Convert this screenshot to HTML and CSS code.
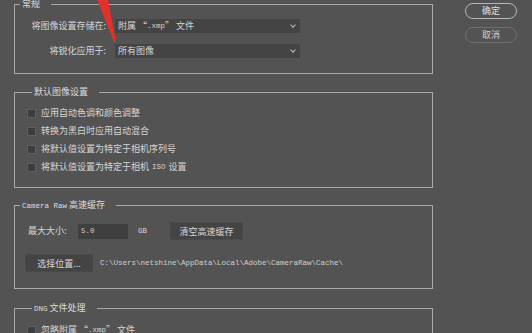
FILE: index.html
```html
<!DOCTYPE html>
<html lang="zh-CN">
    <head>
        <meta charset="UTF-8">
        <title>Camera Raw 首选项</title>
        <link rel="stylesheet" href="styles.css">
    </head>
    <body>
        <div class="dialog">
            <div class="main">

                <fieldset class="group group-general">
                    <legend>常规</legend>
                    <div class="form-grid">
                        <label>将图像设置存储在:</label>
                        <div class="select">附属 “<span class="mono">.xmp</span>” 文件<span class="caret"></span></div>
                        <label>将锐化应用于:</label>
                        <div class="select">所有图像<span class="caret"></span></div>
                    </div>
                </fieldset>

                <fieldset class="group group-defaults">
                    <legend>默认图像设置</legend>
                    <div class="check-row"><span class="checkbox"></span>应用自动色调和颜色调整</div>
                    <div class="check-row"><span class="checkbox"></span>转换为黑白时应用自动混合</div>
                    <div class="check-row"><span class="checkbox"></span>将默认值设置为特定于相机序列号</div>
                    <div class="check-row"><span class="checkbox"></span>将默认值设置为特定于相机 <span class="mono iso">ISO</span> 设置</div>
                </fieldset>

                <fieldset class="group group-cache">
                    <legend><span class="mono">Camera Raw</span> 高速缓存</legend>
                    <div class="cache-row">
                        <label class="size-label">最大大小:</label>
                        <div class="text-input mono">5.0</div>
                        <span class="unit mono">GB</span>
                        <div class="flat-button purge">清空高速缓存</div>
                    </div>
                    <div class="cache-row second">
                        <div class="flat-button choose">选择位置...</div>
                        <span class="path mono">C:\Users\netshine\AppData\Local\Adobe\CameraRaw\Cache\</span>
                    </div>
                </fieldset>

                <fieldset class="group group-dng">
                    <legend><span class="mono">DNG</span> 文件处理</legend>
                    <div class="check-row"><span class="checkbox"></span>忽略附属 “<span class="mono">.xmp</span>” 文件</div>
                </fieldset>

            </div>

            <div class="side">
                <div class="pill-button ok">确定</div>
                <div class="pill-button cancel">取消</div>
            </div>
        </div>

        <!-- red annotation arrow tail over the dialog -->
        <svg class="arrow" width="30" height="45" viewBox="0 0 30 45">
            <polygon points="2,0 13,0 21,42 19,42" fill="#e2302b"/>
        </svg>
    </body>
</html>
```

FILE: styles.css
```css
* {
    box-sizing: border-box;
}
html {
    background-color: #535353;
}
body {
    margin: 0;
    height: 333px;
    overflow: hidden;
    position: relative;
    font-family: "Noto Sans CJK SC", "Noto Sans", sans-serif;
    font-size: 9px;
    line-height: 12px;
    color: #d6d6d6;
}
.mono {
    font-family: "Liberation Mono", "DejaVu Sans Mono", monospace;
    font-size: 7.5px;
}
.dialog {
    display: flex;
    padding-left: 14px;
}
.main {
    width: 419px;
    margin-top: -2px;
}

/* group boxes */
.group {
    margin: 0;
    padding: 0;
    min-width: 0;
    border: 1px solid #a9a9a9;
}
.group legend {
    margin-left: 5px;
    padding: 0 11px 0 2px;
    line-height: 12px;
    color: #dcdcdc;
}
.group-general {
    padding-top: 9px;
    padding-bottom: 15px;
}
.group-defaults {
    margin-top: 12px;
    padding: 6px 0 11px 12px;
}
.group-cache {
    margin-top: 11px;
    padding: 10px 0 16px 0;
}
.group-dng {
    margin-top: 13px;
    padding: 6px 0 20px 12px;
}

/* general */
.form-grid {
    display: grid;
    grid-template-columns: 91px 185px;
    column-gap: 9px;
    row-gap: 11px;
    align-items: center;
}
.form-grid label {
    text-align: right;
}
.select {
    display: flex;
    align-items: center;
    height: 14px;
    padding-left: 3px;
    background-color: #444444;
    white-space: pre;
}
.caret {
    margin-left: auto;
    margin-right: 5px;
    width: 4px;
    height: 4px;
    border-right: 1px solid #bdbdbd;
    border-bottom: 1px solid #bdbdbd;
    transform: rotate(45deg);
    margin-top: -2px;
}

/* checkboxes */
.check-row {
    display: flex;
    align-items: center;
    height: 18px;
    white-space: pre;
}
.checkbox {
    width: 9px;
    height: 9px;
    margin-right: 5px;
    background-color: #3d3d3d;
    border: 1px solid #5f5f5f;
}
.iso {
    margin: 0 1px;
}

/* cache */
.cache-row {
    display: flex;
    align-items: center;
    height: 18px;
}
.cache-row.second {
    margin-top: 14px;
}
.size-label {
    margin-left: 13px;
    width: 50px;
}
.text-input {
    width: 50px;
    height: 15px;
    padding-left: 3px;
    line-height: 15px;
    background-color: #3f3f3f;
    color: #cfcfcf;
}
.unit {
    margin-left: 10px;
    width: 32px;
}
.flat-button {
    height: 18px;
    line-height: 18px;
    text-align: center;
    background-color: #444444;
    border: 1px solid #4a4a4a;
}
.purge {
    width: 73px;
}
.choose {
    margin-left: 10px;
    width: 68px;
}
.path {
    margin-left: 7px;
    color: #cfcfcf;
}

/* right buttons */
.side {
    margin-left: 32px;
    padding-top: 3px;
    display: flex;
    flex-direction: column;
    gap: 8px;
}
.pill-button {
    width: 52px;
    height: 16px;
    line-height: 14px;
    text-align: center;
    border-radius: 8px;
    color: #e0e0e0;
}
.ok {
    border: 1px solid #b8b8b8;
}
.cancel {
    border: 1px solid #6e6e6e;
    color: #cfcfcf;
}

.arrow {
    position: absolute;
    left: 95px;
    top: 0;
}
```
